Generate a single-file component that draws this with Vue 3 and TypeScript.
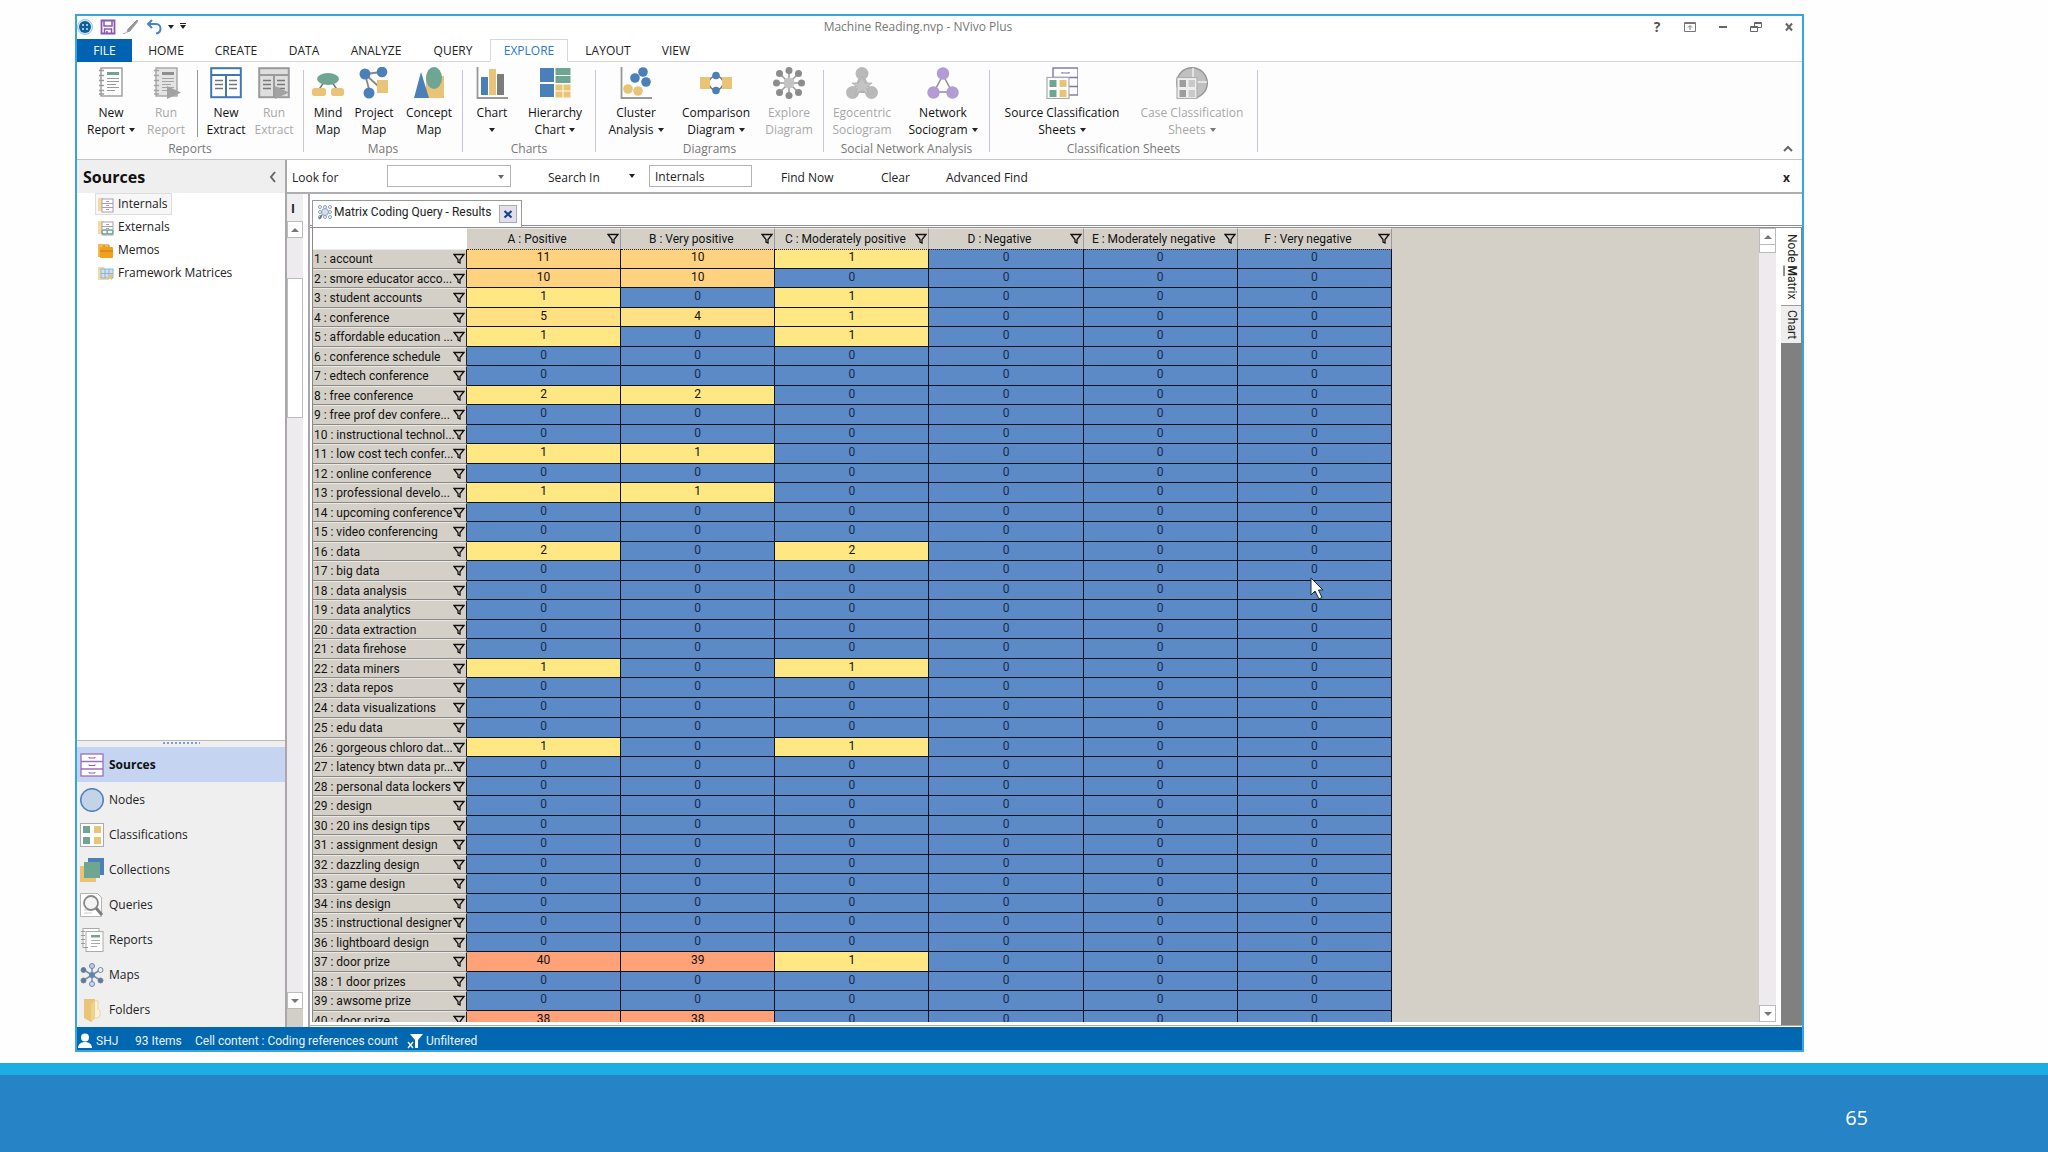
<script setup lang="ts">
import { ref } from 'vue'

interface RibbonButton {
  lines: string[]
  icon: string
  width: number
  disabled?: boolean
  menu?: boolean
  divider?: boolean
}
interface RibbonGroup {
  title: string
  width: number
  pad: number
  buttons: RibbonButton[]
}

const BLUE = '#4a7fb8'
const GREEN = '#6fa593'
const SAND = '#e9c477'
const GREY = '#8c8c8c'
const PURPLE = '#b39bd3'

const page = (line: string, bar: string, fill: string) => `
  <rect x="6" y="1" width="21" height="28" fill="${fill}" stroke="${line}" stroke-width="1.4"/>
  <rect x="12" y="5" width="12" height="3" fill="${bar}"/>
  <path d="M12 11.500h12M12 14.500h12M12 17.500h9M12 20.500h12M12 23.500h8" stroke="${line}" stroke-width="1"/>
  <path d="M4 3.500h5M4 8.500h5M4 13.500h5M4 18.500h5M4 23.500h5M4 27h5" stroke="${line}" stroke-width="1.400"/>`
const extract = (line: string, fill: string) => `
  <rect x="1.200" y="1.200" width="29.600" height="29" fill="${fill}" stroke="${line}" stroke-width="2"/>
  <path d="M1 8h30M16 8v22" stroke="${line}" stroke-width="2"/>
  <path d="M5 13.500h8M5 17.500h8M5 21.500h8M19 13.500h8M19 17.500h8M19 21.500h8" stroke="#777" stroke-width="1.500"/>`
const play = '<path d="M17 19v13l14-6.500z" fill="#a2a2a2"/>'

const icons: Record<string, string> = {
  report: page('#9a9a9a', GREEN, '#fff'),
  runReport: page('#a4a4a4', '#8f8f8f', '#e4e4e4') + play,
  extract: extract('#3f77b5', '#fff'),
  runExtract: extract('#9b9b9b', '#dedede') + play,
  mind: `<path d="M12 15l-6 9M20 15l6 9" stroke="#777" stroke-width="1.500"/>
    <ellipse cx="16" cy="12" rx="11" ry="6" fill="${GREEN}"/>
    <rect x="0" y="21" width="14" height="8" rx="2.500" fill="${SAND}"/><rect x="19" y="21" width="13" height="8" rx="2.500" fill="${SAND}"/>`,
  project: `<path d="M7 7l17-2M7 7l13 12M7 7l5 19" stroke="#888" stroke-width="1.800"/>
    <circle cx="7" cy="7" r="5.500" fill="${BLUE}"/><circle cx="24" cy="5" r="5.300" fill="${BLUE}"/>
    <circle cx="11" cy="26" r="5.500" fill="${BLUE}"/><rect x="19" y="13" width="11" height="13" fill="${SAND}"/>`,
  concept: `<rect x="13" y="9" width="18" height="22" fill="${SAND}"/><path d="M8 5L1 31h15z" fill="${BLUE}"/>
    <ellipse cx="21" cy="11" rx="8" ry="11" fill="${GREEN}"/>`,
  chart: `<path d="M1.500 0v31H32" fill="none" stroke="#999" stroke-width="1.800"/>
    <rect x="5" y="10" width="7" height="18" fill="${BLUE}"/><rect x="13" y="2" width="7" height="26" fill="${SAND}"/><rect x="21" y="7" width="7" height="21" fill="#7c7c7c"/>`,
  hierarchy: `<rect x="1" y="1" width="14" height="14" fill="${BLUE}"/><rect x="1" y="17" width="14" height="13" fill="${BLUE}"/>
    <rect x="16.500" y="1" width="15" height="7" fill="${GREEN}"/><rect x="16.500" y="9" width="15" height="7" fill="${GREEN}"/>
    <rect x="16.500" y="17.500" width="7" height="6" fill="${SAND}"/><rect x="24.500" y="17.500" width="7" height="6" fill="${SAND}"/>
    <rect x="16.500" y="24.500" width="7" height="6" fill="${SAND}"/><rect x="24.500" y="24.500" width="7" height="6" fill="${SAND}"/>`,
  cluster: `<path d="M1.500 0v31H32" fill="none" stroke="#999" stroke-width="1.800"/>
    <circle cx="23" cy="5" r="4.800" fill="${BLUE}"/><circle cx="15" cy="11" r="4.800" fill="${BLUE}"/><circle cx="26" cy="15" r="4.800" fill="${BLUE}"/>
    <circle cx="8" cy="22" r="4.800" fill="${SAND}"/><circle cx="18" cy="24" r="4.800" fill="${SAND}"/>`,
  comparison: `<circle cx="16" cy="16" r="7" fill="none" stroke="#777" stroke-width="1.500"/>
    <rect x="0" y="10" width="10" height="12" fill="${SAND}"/><rect x="22" y="10" width="10" height="12" fill="${SAND}"/>
    <circle cx="16" cy="8.500" r="3.800" fill="${BLUE}"/><circle cx="16" cy="23.500" r="3.800" fill="${BLUE}"/>`,
  explore: `<path d="M16 3v26M3 16h26M7 7l18 18M25 7L7 25" stroke="#999" stroke-width="1.500"/>
    <circle cx="16" cy="16" r="5.500" fill="#c3c3c3"/>
    <g fill="${GREY}"><circle cx="16" cy="3.500" r="3.500"/><circle cx="16" cy="28.500" r="3.500"/><circle cx="3.500" cy="16" r="3.500"/><circle cx="28.500" cy="16" r="3.500"/>
    <circle cx="6.500" cy="6.500" r="3.500"/><circle cx="25.500" cy="6.500" r="3.500"/><circle cx="6.500" cy="25.500" r="3.500"/><circle cx="25.500" cy="25.500" r="3.500"/></g>`,
  egocentric: `<path d="M16 7L7 25h18z" fill="none" stroke="#b4b4b4" stroke-width="2"/>
    <circle cx="16" cy="6.500" r="6.500" fill="#b9b9b9"/><circle cx="6.500" cy="25.500" r="6.500" fill="#b9b9b9"/><circle cx="25.500" cy="25.500" r="6.500" fill="#b9b9b9"/>
    <path d="M16 9l3 7h7l-5.500 4.500 2 7L16 23.500 9.500 27.500l2-7L6 16h7z" fill="#c4c4c4" stroke="#adadad" stroke-width=".8"/>`,
  network: `<path d="M16 8L7 25h18z" fill="none" stroke="#8f8f8f" stroke-width="1.500"/>
    <circle cx="16" cy="6.500" r="6.200" fill="${PURPLE}"/><circle cx="6.500" cy="25.500" r="6.200" fill="${PURPLE}"/><circle cx="25.500" cy="25.500" r="6.200" fill="${PURPLE}"/>`,
  sourceSheets: `<rect x="7" y="1" width="25" height="27" fill="#fff" stroke="#7e72a8" stroke-width="1.400"/>
    <path d="M7 10.500h25M7 19.500h25" stroke="#7e72a8" stroke-width="1.400"/><path d="M16 5v1h7V5" fill="none" stroke="#7e72a8" stroke-width="1.200"/>
    <rect x="1" y="10.500" width="22" height="21" fill="#fff" stroke="#aaa" stroke-width="1.200"/>
    <rect x="3.500" y="13" width="7" height="7" fill="${GREEN}"/><rect x="13.500" y="13" width="7" height="7" fill="${SAND}"/>
    <rect x="3.500" y="23" width="7" height="7" fill="${GREEN}"/><rect x="13.500" y="23" width="7" height="7" fill="${SAND}"/>`,
  caseSheets: `<circle cx="16" cy="16" r="15.300" fill="#c0c0c0" stroke="#989898" stroke-width="1.500"/>
    <path d="M17 1v14h14" fill="none" stroke="#eee" stroke-width="1.500"/>
    <rect x="1" y="10.500" width="20" height="21" fill="#eee" stroke="#b0b0b0" stroke-width="1.200"/>
    <rect x="3.500" y="13" width="6.500" height="7" fill="#9d9d9d"/><rect x="12.500" y="13" width="6.500" height="7" fill="#c9c9c9"/>
    <rect x="3.500" y="23" width="6.500" height="7" fill="#9d9d9d"/><rect x="12.500" y="23" width="6.500" height="7" fill="#c9c9c9"/>`,
}

const groups: RibbonGroup[] = [
  {
    title: 'Reports', width: 226, pad: 7,
    buttons: [
      { lines: ['New', 'Report'], icon: 'report', width: 54, menu: true },
      { lines: ['Run', 'Report'], icon: 'runReport', width: 56, disabled: true },
      { lines: ['New', 'Extract'], icon: 'extract', width: 50, divider: true },
      { lines: ['Run', 'Extract'], icon: 'runExtract', width: 46, disabled: true },
    ],
  },
  {
    title: 'Maps', width: 158, pad: 4,
    buttons: [
      { lines: ['Mind', 'Map'], icon: 'mind', width: 40 },
      { lines: ['Project', 'Map'], icon: 'project', width: 52 },
      { lines: ['Concept', 'Map'], icon: 'concept', width: 58 },
    ],
  },
  {
    title: 'Charts', width: 132, pad: 0,
    buttons: [
      { lines: ['Chart', ''], icon: 'chart', width: 58, menu: true },
      { lines: ['Hierarchy', 'Chart'], icon: 'hierarchy', width: 68, menu: true },
    ],
  },
  {
    title: 'Diagrams', width: 227, pad: 4,
    buttons: [
      { lines: ['Cluster', 'Analysis'], icon: 'cluster', width: 72, menu: true },
      { lines: ['Comparison', 'Diagram'], icon: 'comparison', width: 88, menu: true },
      { lines: ['Explore', 'Diagram'], icon: 'explore', width: 58, disabled: true },
    ],
  },
  {
    title: 'Social Network Analysis', width: 165, pad: 0,
    buttons: [
      { lines: ['Egocentric', 'Sociogram'], icon: 'egocentric', width: 76, disabled: true },
      { lines: ['Network', 'Sociogram'], icon: 'network', width: 86, menu: true },
    ],
  },
  {
    title: 'Classification Sheets', width: 267, pad: 0,
    buttons: [
      { lines: ['Source Classification', 'Sheets'], icon: 'sourceSheets', width: 144, menu: true },
      { lines: ['Case Classification', 'Sheets'], icon: 'caseSheets', width: 116, menu: true, disabled: true },
    ],
  },
]

const ribbonTabs = [
  { name: 'HOME', width: 68 },
  { name: 'CREATE', width: 72 },
  { name: 'DATA', width: 64 },
  { name: 'ANALYZE', width: 80 },
  { name: 'QUERY', width: 74 },
  { name: 'EXPLORE', width: 78 },
  { name: 'LAYOUT', width: 80 },
  { name: 'VIEW', width: 56 },
]
const activeTab = ref('EXPLORE')

const folderBack = '<path d="M1 2h6l1 2h4v11H1z" fill="#f3d9a4"/>'
const cabinet = `<rect x="5" y="3" width="11" height="13" fill="#fff" stroke="#a99bb5"/><path d="M5 7.500h11M5 11.500h11M9 5.500h3M9 9.500h3M9 13.500h3" stroke="#a99bb5"/>`
const tree = [
  { name: 'Internals', icon: folderBack + cabinet },
  { name: 'Externals', icon: folderBack + cabinet + '<rect x="5" y="11" width="6" height="4" rx="2" fill="#fff" stroke="#6fa593" stroke-width="1.300"/><rect x="10" y="11" width="6" height="4" rx="2" fill="#fff" stroke="#6fa593" stroke-width="1.300"/>' },
  { name: 'Memos', icon: '<path d="M1 2h6l1 2h4v11H1z" fill="#f1b94e"/><rect x="3" y="5" width="13" height="11" rx="1" fill="#f0a01e"/><path d="M7 5V3h5v2M3 9h13" fill="none" stroke="#c77f10"/>' },
  { name: 'Framework Matrices', icon: folderBack + '<rect x="4" y="4" width="12" height="9" fill="#cfe0ee" stroke="#8fb4d2"/><path d="M4 8.500h12M8 4v9M12 4v9" stroke="#8fb4d2"/><path d="M10 12l5-3v6z" fill="#e9c477"/>' },
]
const selectedFolder = ref('Internals')

const nav = [
  { name: 'Sources', icon: '<rect x="1" y="1" width="22" height="22" fill="#fff" stroke="#9a6fc0" stroke-width="1.300"/><path d="M1 8.500h22M1 16h22" stroke="#9a6fc0" stroke-width="1.300"/><path d="M9 4v1h6V4M9 11.500v1h6v-1M9 19v1h6v-1" fill="none" stroke="#8a62ad"/>' },
  { name: 'Nodes', icon: '<circle cx="12" cy="12" r="11.300" fill="#c3d3ea" stroke="#5080b8" stroke-width="1.500"/>' },
  { name: 'Classifications', icon: `<rect x=".5" y=".5" width="23" height="23" fill="#fff" stroke="#aaa"/><rect x="3" y="3" width="7" height="7" fill="${GREEN}"/><rect x="14" y="3" width="7" height="7" fill="${SAND}"/><rect x="3" y="14" width="7" height="7" fill="${GREEN}"/><rect x="14" y="14" width="7" height="7" fill="${SAND}"/>` },
  { name: 'Collections', icon: `<rect x="8" y="0" width="16" height="17" fill="${BLUE}"/><rect x="0" y="8" width="16" height="16" fill="${SAND}"/><rect x="4" y="4" width="16" height="16" fill="${GREEN}"/>` },
  { name: 'Queries', icon: '<path d="M.5.500h17l4 4v19H.5z" fill="#fff" stroke="#b5b5b5"/><path d="M4 17h8M4 20h8" stroke="#ccc"/><circle cx="11" cy="10" r="7" fill="#f4f4f4" stroke="#888" stroke-width="1.800"/><path d="M16 15l6 7" stroke="#7d7d7d" stroke-width="3"/>' },
  { name: 'Reports', icon: `<rect x="3" y=".5" width="16" height="19" fill="#fff" stroke="#aaa"/><rect x="6" y="3.500" width="17" height="20" fill="#fff" stroke="#aaa"/><rect x="11" y="7" width="9" height="2.500" fill="${GREEN}"/><path d="M11 12.500h9M11 15.500h9M11 18.500h6" stroke="#aaa"/><path d="M1 3.500h4M1 7.500h4M1 11.500h4M1 15.500h4M4 19.500h4" stroke="#999"/>` },
  { name: 'Maps', icon: '<path d="M12 4v16M4 7l16 10M20 7L4 17" stroke="#7f8fa3" stroke-width="1.500"/><circle cx="12" cy="12" r="3" fill="#5b86b8"/><g stroke="#6c86a8"><circle cx="12" cy="3" r="2.500" fill="#c9c4e4"/><circle cx="12" cy="21" r="2.500" fill="#c7dcee"/><circle cx="3.500" cy="7" r="2.500" fill="#66788f"/><circle cx="20.500" cy="7" r="2.500" fill="#eee"/><circle cx="3.500" cy="17.500" r="2.500" fill="#66788f"/><circle cx="20.500" cy="17.500" r="2.500" fill="#66788f"/></g>' },
  { name: 'Folders', icon: '<path d="M14 3h4v8c3 0 3 9-1 9h-3z" fill="#fbf3df" stroke="#ecd39a"/><path d="M4 1h11v19l-4 4-7-4z" fill="#e9c477"/><path d="M11 6l4-4v18l-4 4z" fill="#f0d08c"/>' },
]
const activeNav = ref('Sources')

const columns = ['A : Positive', 'B : Very positive', 'C : Moderately positive', 'D : Negative', 'E : Moderately negative', 'F : Very negative']
const labels = [
  'account', 'smore educator acco...', 'student accounts', 'conference', 'affordable education ...',
  'conference schedule', 'edtech conference', 'free conference', 'free prof dev confere...', 'instructional technol...',
  'low cost tech confer...', 'online conference', 'professional develo...', 'upcoming conference', 'video conferencing',
  'data', 'big data', 'data analysis', 'data analytics', 'data extraction',
  'data firehose', 'data miners', 'data repos', 'data visualizations', 'edu data',
  'gorgeous chloro dat...', 'latency btwn data pr...', 'personal data lockers', 'design', '20 ins design tips',
  'assignment design', 'dazzling design', 'game design', 'ins design', 'instructional designer',
  'lightboard design', 'door prize', '1 door prizes', 'awsome prize', 'door prize',
]
// Only rows with coded references are listed; every other cell is zero.
const counts: Record<number, number[]> = {
  1: [11, 10, 1], 2: [10, 10, 0], 3: [1, 0, 1], 4: [5, 4, 1], 5: [1, 0, 1], 8: [2, 2, 0],
  11: [1, 1, 0], 13: [1, 1, 0], 16: [2, 0, 2], 22: [1, 0, 1], 26: [1, 0, 1], 37: [40, 39, 1], 40: [38, 38, 0],
}
const rows = labels.map((label, i) => ({
  title: `${i + 1} : ${label}`,
  cells: columns.map((_, c) => counts[i + 1]?.[c] ?? 0),
}))
const heat = (n: number) => (n === 0 ? 'zero' : n < 4 ? 'low' : n < 10 ? 'mid' : n < 20 ? 'warm' : 'hot')

const lookFor = ref('')
const searchIn = ref('Internals')
</script>

<template>
  <div class="slide">
    <div class="window">
      <header class="titlebar">
        <div class="quick">
          <svg class="logo" viewBox="0 0 16 16"><circle cx="8" cy="8" r="7.500" fill="#d6e8f4" stroke="#9cc6e0" /><circle cx="8" cy="8" r="6" fill="#0f5f9f" /><g fill="#cfe6f5"><circle cx="6" cy="6" r="1" /><circle cx="10" cy="6" r="1" /><circle cx="6" cy="10" r="1" /><circle cx="10" cy="10" r="1" /></g></svg>
          <button aria-label="Save"><svg viewBox="0 0 16 16"><path d="M1.500 1.500h13v13h-13z" fill="#fff" stroke="#8a58b0" stroke-width="1.800" /><path d="M4 2v5h8V2M4.500 14v-4h7v4M7 12v2" fill="none" stroke="#8a58b0" stroke-width="1.500" /></svg></button>
          <button aria-label="Edit"><svg viewBox="0 0 16 16"><path d="M14 1l1 1-8 10-3 1 1-3z" fill="#999" stroke="#999" /><path d="M0 14.500c3 0 4-1 5-3" stroke="#aaa" fill="none" /></svg></button>
          <button aria-label="Undo"><svg viewBox="0 0 16 16"><path d="M2 5h8c6 0 6 9 0 9.500M6 1L2 5l4 4" fill="none" stroke="#4a84c8" stroke-width="2" /></svg></button>
          <button class="slim" aria-label="Undo history"><i class="tri"></i></button>
          <button class="slim custom" aria-label="Customize toolbar"><i class="tri"></i></button>
        </div>
        <h1>Machine Reading.nvp - NVivo Plus</h1>
        <div class="controls">
          <button class="help" aria-label="Help">?</button>
          <button aria-label="Ribbon options"><svg viewBox="0 0 12 12"><path d="M.5 1.500h11v9H.5zM.5 2.500h11M6 9V5M4 6.500l2-2 2 2" fill="none" stroke="#777" /></svg></button>
          <button aria-label="Minimize"><svg viewBox="0 0 12 12"><path d="M2 6h8" stroke="#666" stroke-width="2" /></svg></button>
          <button aria-label="Restore"><svg viewBox="0 0 12 12"><path d="M.5 5.500h7v5h-7zM.5 6.500h7M4.500 5V1.500h7v5H8M4.500 2.500h7" fill="none" stroke="#666" /></svg></button>
          <button aria-label="Close"><svg viewBox="0 0 12 12"><path d="M3 2.500l6 7M9 2.500l-6 7" stroke="#666" stroke-width="2" /></svg></button>
        </div>
      </header>

      <nav class="tabs">
        <button class="file">FILE</button>
        <button v-for="t in ribbonTabs" :key="t.name" :style="{ width: t.width + 'px' }" :class="{ active: activeTab === t.name }" @click="activeTab = t.name">{{ t.name }}</button>
        <span class="rest"></span>
      </nav>

      <div class="ribbon">
        <section v-for="g in groups" :key="g.title" class="group" :style="{ width: g.width + 'px' }">
          <div class="buttons" :style="{ paddingLeft: g.pad + 'px' }">
            <template v-for="b in g.buttons" :key="b.icon">
              <span v-if="b.divider" class="divider"></span>
              <button class="tool" :disabled="b.disabled" :style="{ width: b.width + 'px' }">
                <svg viewBox="0 0 32 32" v-html="icons[b.icon]"></svg>
                <span>{{ b.lines[0] }}</span>
                <span class="second"><span v-if="b.lines[1]">{{ b.lines[1] }}</span><i v-if="b.menu" class="tri"></i></span>
              </button>
            </template>
          </div>
          <h2>{{ g.title }}</h2>
        </section>
        <button class="collapse" aria-label="Collapse ribbon"><svg viewBox="0 0 12 12"><path d="M2 8l4-4 4 4" fill="none" stroke="#666" stroke-width="2" /></svg></button>
      </div>

      <div class="body">
        <aside>
          <div class="pane-head">
            <h2>Sources</h2>
            <button aria-label="Collapse pane"><svg viewBox="0 0 12 12"><path d="M8 1L4 6l4 5" fill="none" stroke="#666" stroke-width="2" /></svg></button>
          </div>
          <ul class="tree">
            <li v-for="f in tree" :key="f.name">
              <button :class="{ selected: selectedFolder === f.name }" @click="selectedFolder = f.name"><svg viewBox="0 0 17 17" v-html="f.icon"></svg>{{ f.name }}</button>
            </li>
          </ul>
          <div class="splitter"><span></span></div>
          <ul class="nav">
            <li v-for="n in nav" :key="n.name">
              <button :class="{ active: activeNav === n.name }" @click="activeNav = n.name"><svg viewBox="0 0 24 24" v-html="n.icon"></svg>{{ n.name }}</button>
            </li>
          </ul>
        </aside>

        <main>
          <form class="find" @submit.prevent>
            <label for="look">Look for</label>
            <span class="combo"><input id="look" v-model="lookFor" type="text"><i class="tri"></i></span>
            <label for="scope" class="in">Search In</label>
            <i class="tri"></i>
            <input id="scope" v-model="searchIn" class="scope" type="text">
            <button type="submit" class="now">Find Now</button>
            <button type="button" class="clear">Clear</button>
            <button type="button">Advanced Find</button>
            <button type="button" class="shut" aria-label="Close find bar">x</button>
          </form>

          <div class="work">
            <div class="list">
              <button class="stub">I</button>
              <div class="bar">
                <button aria-label="Scroll list up"><i class="tri up"></i></button>
                <span class="thumb"></span>
                <button aria-label="Scroll list down"><i class="tri grey"></i></button>
                <span class="corner"></span>
              </div>
            </div>

            <div class="detail">
              <div class="doc-tabs">
                <div class="doc-tab">
                  <svg viewBox="0 0 16 16"><g fill="none" stroke="#8ba0b4"><circle cx="3" cy="3" r="1.500" /><circle cx="8" cy="3" r="1.500" /><circle cx="13" cy="3" r="1.500" /><circle cx="3" cy="8" r="1.500" /><circle cx="13" cy="8" r="1.500" /><circle cx="3" cy="13" r="1.500" /><circle cx="8" cy="13" r="1.500" /><circle cx="13" cy="13" r="1.500" /><circle cx="8" cy="8" r="3.500" fill="#cfe0f0" /></g><path d="M5 11l-3 4" stroke="#777" stroke-width="1.500" /></svg>
                  <span>Matrix Coding Query - Results</span>
                  <button aria-label="Close results"><svg viewBox="0 0 12 12"><path d="M2.500 3l7 6.500M9.500 3l-7 6.500" stroke="#1c3f94" stroke-width="2.200" /></svg></button>
                </div>
              </div>
              <div class="panes">
                <div class="grid">
                  <table>
                    <thead>
                      <tr>
                        <td class="blank"></td>
                        <th v-for="c in columns" :key="c" scope="col"><div><span>{{ c }}</span><svg class="funnel" viewBox="0 0 12 12"><path d="M1 1.500h10L7 6.500V10L5 9V6.500z" fill="none" stroke="#111" stroke-width="1.300" /></svg></div></th>
                      </tr>
                    </thead>
                    <tbody>
                      <tr v-for="(r, i) in rows" :key="r.title" :class="{ current: i === 0 }">
                        <th scope="row"><div><span>{{ r.title }}</span><svg class="funnel" viewBox="0 0 12 12"><path d="M1 1.500h10L7 6.500V10L5 9V6.500z" fill="none" stroke="#111" stroke-width="1.300" /></svg></div></th>
                        <td v-for="(n, c) in r.cells" :key="c" :class="heat(n)">{{ n }}</td>
                      </tr>
                    </tbody>
                  </table>
                  <svg class="pointer" viewBox="0 0 14 24"><path d="M1 1v17l4-4 4 8 3-1.500L8.500 13H13z" fill="#fff" stroke="#1a2a44" /></svg>
                </div>
                <div class="vbar">
                  <button aria-label="Scroll up"><i class="tri up"></i></button>
                  <span class="thumb"></span>
                  <button aria-label="Scroll down"><i class="tri grey"></i></button>
                </div>
                <div class="side-tabs">
                  <button class="on"><span>Node <u>M</u>atrix</span></button>
                  <button><span>Chart</span></button>
                </div>
              </div>
            </div>
          </div>
        </main>
      </div>

      <footer class="status">
        <svg viewBox="0 0 16 16"><circle cx="8" cy="4.500" r="4" fill="#fff" /><path d="M1 15c0-8 14-8 14 0z" fill="#fff" /></svg>
        <span class="user">SHJ</span>
        <span class="items">93 Items</span>
        <span class="content">Cell content : Coding references count</span>
        <svg viewBox="0 0 16 16"><path d="M3 1h13l-5 6v8H8V7z" fill="#fff" /><path d="M1 9l5 6M6 9l-5 6" stroke="#fff" stroke-width="1.300" /></svg>
        <span>Unfiltered</span>
      </footer>
    </div>
    <div class="band"><span>65</span></div>
  </div>
</template>

<style>
body { margin: 0; }
</style>

<style scoped>
.slide { display: flex; flex-direction: column; height: 100vh; min-height: 640px; overflow: hidden; background: #fefefe; font: 12px/16px "Open Sans", "Noto Sans", sans-serif; color: #222; }
.slide *, .slide *::before { box-sizing: border-box; }
button { margin: 0; padding: 0; border: 0; background: none; font: inherit; color: inherit; }
h1, h2, ul { margin: 0; padding: 0; font: inherit; list-style: none; }
svg { display: block; flex: none; }
.window { flex: 1; min-height: 0; display: flex; flex-direction: column; margin: 14px 244px 11px 75px; border: 2px solid #35a7dc; background: #fff; }
.band { flex: none; height: 89px; border-top: 12px solid #1cade4; background: #2683c6; display: flex; align-items: center; justify-content: flex-end; padding: 8px 180px 0 0; color: #fff; font-size: 20px; line-height: 28px; }

.tri { display: inline-block; flex: none; width: 0; height: 0; border: 3px solid transparent; border-top: 4px solid #222; border-bottom: 0; vertical-align: 2px; }
.tri.up { border-top: 0; border-bottom: 4px solid #777; border-left-width: 4px; border-right-width: 4px; }
.tri.grey { border-top-color: #777; border-left-width: 4px; border-right-width: 4px; }

.titlebar { flex: none; display: flex; align-items: center; height: 23px; padding: 0 1px 2px 0; }
.quick { display: flex; align-items: center; width: 114px; }
.quick svg { width: 16px; height: 16px; }
.quick button { margin-left: 7px; }
.quick .slim { width: 6px; margin-left: 6px; }
.quick .custom { border-top: 1px solid #222; height: 8px; display: flex; align-items: center; justify-content: center; }
.titlebar h1 { flex: 1; text-align: center; color: #777; }
.controls { display: flex; gap: 9px; }
.controls button { width: 24px; height: 16px; display: flex; align-items: center; justify-content: center; }
.controls svg { width: 12px; height: 12px; }
.help { font-weight: 700; font-size: 14px; color: #555; }

.tabs { flex: none; display: flex; height: 23px; }
.tabs button { height: 23px; border-bottom: 1px solid #d8d6dc; padding-top: 1px; }
.tabs .file { width: 55px; background: #0063b1; color: #fff; border-color: #0063b1; }
.tabs .active { border: 1px solid #d8d6dc; border-bottom-color: transparent; padding-top: 0; color: #2a7ac0; }
.rest { flex: 1; border-bottom: 1px solid #d8d6dc; }

.ribbon { flex: none; display: flex; height: 98px; border-bottom: 1px solid #c6c4c8; background: #fdfdfd; }
.group { position: relative; box-sizing: content-box; flex: none; margin-right: 1px; padding-top: 4px; }
.group::after { content: ""; position: absolute; right: -1px; top: 8px; width: 1px; height: 82px; background: #c3c6dc; }
.group h2 { text-align: center; color: #777; }
.buttons { display: flex; height: 75px; }
.tool { display: flex; flex-direction: column; align-items: center; white-space: nowrap; line-height: 17px; color: #111; }
.tool svg { width: 32px; height: 32px; margin: 1px 0 5px; }
.tool:disabled { color: #a8a8a8; }
.second { display: flex; align-items: center; gap: 4px; height: 17px; }
.tool:disabled .tri { border-top-color: #777; }
.divider { width: 1px; height: 67px; margin: 4px 3px 0; background: #999; }
.collapse { margin: auto 8px 4px auto; }
.collapse svg { width: 12px; height: 12px; }

.body { flex: 1; min-height: 0; display: flex; }
aside { flex: none; display: flex; flex-direction: column; width: 210px; border-right: 2px solid #aaa6ac; background: #fff; }
.pane-head { flex: none; display: flex; align-items: center; justify-content: space-between; height: 33px; padding: 0 6px; background: #f0eff0; }
.pane-head h2 { font-size: 16px; font-weight: 700; line-height: 22px; color: #111; }
.pane-head svg { width: 12px; height: 12px; }
.tree { flex: 1; display: flex; flex-direction: column; gap: 1px; padding-left: 18px; }
.tree li { height: 22px; }
.tree button { display: flex; align-items: center; gap: 4px; height: 22px; padding: 0 4px 0 1px; border: 1px solid transparent; }
.tree .selected { border-color: #ddd; background: #f8f7f8; }
.tree svg { width: 17px; height: 17px; }
.splitter { flex: none; height: 7px; border-top: 1px solid #bbb; background: #f0eff0; display: flex; justify-content: center; }
.splitter span { width: 37px; height: 2px; margin-top: 1px; background: repeating-linear-gradient(90deg, #7f9cd0 0 2px, transparent 2px 4px); }
.nav { flex: none; background: #f0eff0; }
.nav button { display: flex; align-items: center; gap: 5px; width: 100%; height: 35px; padding-left: 3px; }
.nav .active { background: #c5d5f1; font-weight: 700; color: #111; }
.nav svg { width: 24px; height: 24px; }

main { flex: 1; min-width: 0; display: flex; flex-direction: column; }
.find { flex: none; display: flex; align-items: center; height: 34px; padding-left: 5px; border-bottom: 2px solid #b0adb2; white-space: nowrap; }
.find label, .find button { padding-top: 3px; }
.find label { width: 95px; }
.find .in { width: 81px; margin-left: 37px; }
.find input { height: 22px; border: 1px solid #b5b2b8; padding: 0 5px; font: inherit; color: inherit; background: #fff; outline: 0; }
.combo { position: relative; display: flex; width: 124px; }
.combo input { width: 100%; }
.combo .tri { position: absolute; right: 7px; top: 10px; border-top-color: #666; }
.find .scope { width: 103px; margin: 0 29px 0 14px; }
.now { width: 100px; text-align: left; }
.clear { width: 65px; text-align: left; }
.shut { margin-left: auto; padding-right: 12px; font-weight: 700; }

.work { flex: 1; min-height: 0; display: flex; }
.list { flex: none; width: 21px; display: flex; flex-direction: column; }
.stub { width: 16px; height: 27px; padding: 2px 4px 0; background: #f0eff0; font-weight: 700; text-align: left; }
.bar { flex: 1; width: 16px; display: flex; flex-direction: column; background: #edebed; }
.bar button, .vbar button { flex: none; width: 100%; height: 17px; display: flex; align-items: center; justify-content: center; border: 1px solid #bbb; background: #fff; }
.bar .thumb { height: 140px; margin: 40px 0 auto; border: 1px solid #bbb; background: #fff; }
.corner { height: 18px; background: #d2cfc8; }
.detail { flex: 1; min-width: 0; display: flex; flex-direction: column; border-left: 2px solid #aaa6ac; padding-bottom: 1px; }
.doc-tabs { flex: none; height: 34px; padding: 6px 0 0 2px; border-bottom: 3px double #8f8d92; }
.doc-tab { display: flex; align-items: center; width: 210px; height: 27px; padding: 0 4px; border: 1px solid #999; border-bottom: 0; background: #fff; font: 12px/16px Roboto, "Liberation Sans", sans-serif; white-space: nowrap; }
.doc-tab > svg { width: 16px; height: 16px; margin: 0 1px 4px 0; }
.doc-tab span { flex: 1; margin-bottom: 4px; }
.doc-tab button { width: 18px; height: 18px; display: grid; place-items: center; border: 1px solid #aaa; background: #dfe0ea; }
.doc-tab button svg { width: 12px; height: 12px; }

.panes { flex: 1; min-height: 0; display: flex; border-bottom: 1px solid #aaa; }
.grid { flex: 1; min-width: 0; position: relative; overflow: hidden; margin: 0 0 3px 2px; background: #d4d0c8; border-left: 1px solid #888; }
table { width: 1079px; table-layout: fixed; border-collapse: separate; border-spacing: 0; font: 12px/16px Roboto, "Liberation Sans", sans-serif; color: #111; }
th, td { padding: 0; }
th { font-weight: 400; background: #d4d0c8; }
.blank { width: 154px; height: 21px; background: #fff; }
th div { display: flex; align-items: center; padding-right: 1px; white-space: nowrap; }
th span { flex: 1; min-width: 0; }
.funnel { width: 12px; height: 12px; }
thead th { border-right: 1px solid #999; border-top: 1px solid #eeebe2; }
thead th span { text-align: center; }
tbody tr { height: 19px; }
tbody tr:nth-child(odd), tbody tr:nth-child(24n) { height: 20px; }
tbody th { text-align: left; border-bottom: 1px solid #888; border-top: 1px solid #eceae4; border-right: 1px solid #222; }
tbody th div { padding-left: 1px; }
tbody td { text-align: center; vertical-align: top; border-right: 1px solid #0c1420; border-bottom: 1px solid #0c1420; }
.zero { background: #5b8ac6; color: #142c50; }
.low { background: #ffe784; }
.mid { background: #ffe184; }
.warm { background: #ffd280; }
.hot { background: #ffa277; }
.current td { border-top: 1px dotted #222; line-height: 14px; }
.pointer { position: absolute; left: 997px; top: 349px; width: 14px; height: 24px; }
.vbar { flex: none; width: 17px; margin-bottom: 3px; display: flex; flex-direction: column; background: #edebed; }
.vbar .thumb { height: 8px; margin-bottom: auto; border: 1px solid #bbb; border-top: 0; background: #fff; }
.side-tabs { flex: none; width: 26px; padding: 0 1px 0 5px; display: flex; flex-direction: column; background: linear-gradient(90deg, #fff 5px, #808080 5px); font: 12px/16px Roboto, "Liberation Sans", sans-serif; }
.side-tabs button { height: 38px; padding-left: 2px; background: #efeeee; border-top: 1px solid #999; display: grid; place-items: center; }
.side-tabs .on { height: 77px; background: #fff; border: 0; }
.side-tabs span { writing-mode: vertical-rl; }
.side-tabs u { font-weight: 700; }

.status { flex: none; display: flex; align-items: center; height: 23px; padding-top: 4px; background: #0067b0; color: #e8f3fb; font: 12px/16px Roboto, "Liberation Sans", sans-serif; white-space: nowrap; }
.status svg { width: 16px; height: 16px; margin-right: 3px; }
.user { width: 39px; }
.items { width: 60px; }
.content { width: 212px; }
</style>
